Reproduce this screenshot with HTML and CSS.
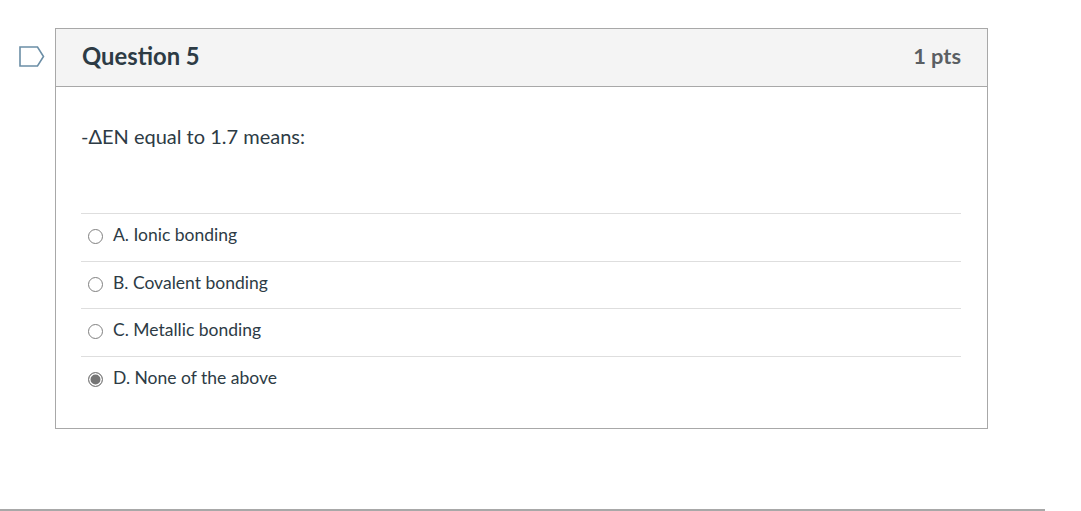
FILE: index.html
```html
<!DOCTYPE html>
<html lang="en">
<head>
<meta charset="utf-8">
<title>Question 5</title>
<link rel="stylesheet" href="styles.css">
</head>
<body>
<div class="page">
  <div class="gutter">
    <svg class="flag" width="26" height="21" viewBox="0 0 26 21"><path d="M1 1H18.5L24.5 10.500L18.5 20H1Z" fill="none" stroke="#6b8ea6" stroke-width="1.600"/></svg>
  </div>
  <section class="card">
    <header class="card-head">
      <h2 class="title">Question 5</h2>
      <span class="pts">1 pts</span>
    </header>
    <div class="card-body">
      <p class="prompt">-ΔEN equal to 1.7 means:</p>
      <div class="answers">
        <label class="answer"><span class="radio"></span><span class="answer-text">A. Ionic bonding</span></label>
        <label class="answer"><span class="radio"></span><span class="answer-text">B. Covalent bonding</span></label>
        <label class="answer"><span class="radio"></span><span class="answer-text">C. Metallic bonding</span></label>
        <label class="answer"><span class="radio checked"></span><span class="answer-text">D. None of the above</span></label>
      </div>
    </div>
  </section>
</div>
<div class="rule"></div>
</body>
</html>
```
FILE: styles.css
```css
html, body {
  margin: 0;
  padding: 0;
  background: #fff;
  height: 511px;
  overflow: hidden;
}
body {
  font-family: Lato, "Open Sans", sans-serif;
  color: #2d3b45;
}
.page {
  display: flex;
  padding-top: 28px;
  height: 509px;
  box-sizing: border-box;
}
.gutter {
  width: 55px;
  flex: none;
  display: flex;
  justify-content: flex-end;
  align-items: flex-start;
  padding: 18px 10px 0 0;
  box-sizing: border-box;
}
.flag { display: block; }
.card {
  width: 933px;
  height: 401px;
  box-sizing: border-box;
  border: 1px solid #a8a8a8;
  flex: none;
}
.card-head {
  height: 58px;
  background: #f4f4f4;
  border-bottom: 1px solid #a8a8a8;
  box-sizing: border-box;
  display: flex;
  justify-content: space-between;
  align-items: center;
  padding: 0 26px 4px 26px;
}
.title {
  margin: 0;
  font-size: 23.800px;
  font-weight: 700;
  color: #2d3b45;
}
.pts {
  font-size: 21.800px;
  font-weight: 700;
  color: #5a5f63;
}
.card-body {
  padding: 0 26px 0 25px;
}
.prompt {
  margin: 0;
  padding-top: 36px;
  height: 126px;
  box-sizing: border-box;
  font-size: 20px;
  line-height: 26px;
}
.answer {
  display: flex;
  align-items: center;
  height: 47.500px;
  box-sizing: border-box;
  border-top: 1px solid #dedede;
  padding-left: 7px;
  gap: 10px;
  font-size: 17.500px;
}
.answer-text {
  position: relative;
  top: -2.500px;
}
.radio {
  width: 15px;
  height: 15px;
  box-sizing: border-box;
  border: 1.500px solid #808080;
  border-radius: 50%;
  margin-top: -1px;
  flex: none;
  background: #fff;
}
.radio.checked {
  background: #757575;
  box-shadow: inset 0 0 0 1.500px #fff;
}
.rule {
  width: 1045px;
  height: 2px;
  background: #a8a8a8;
}
```
